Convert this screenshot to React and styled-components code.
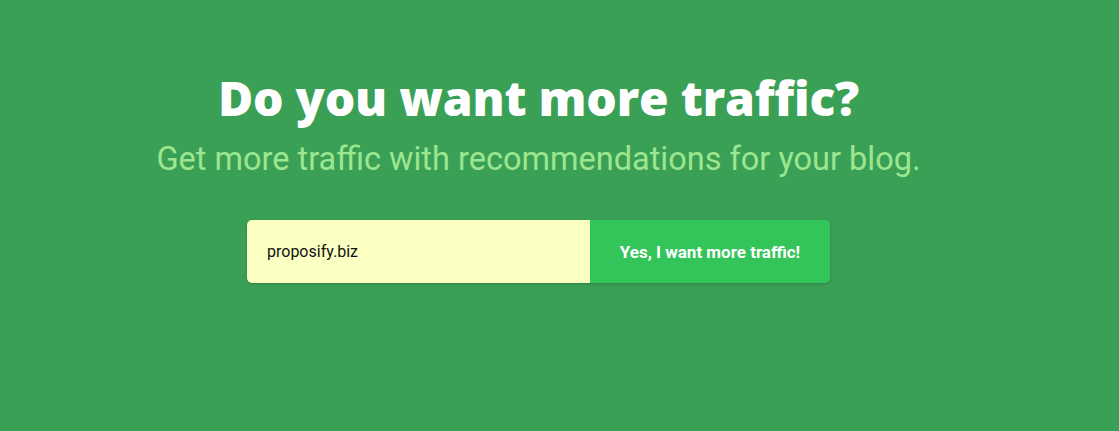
import React from "react";
import styled, { createGlobalStyle } from "styled-components";

const GlobalStyle = createGlobalStyle`
  html, body {
    margin: 0;
    padding: 0;
    background: #3aa056;
  }
  body {
    font-family: Roboto, "Liberation Sans", sans-serif;
  }
`;

const Hero = styled.section`
  height: 431px;
  background: #3aa056;
  display: flex;
  flex-direction: column;
  align-items: center;
  padding: 70px 42px 0 0;
  box-sizing: border-box;
`;

const Title = styled.h1`
  margin: 0;
  color: #ffffff;
  font-family: "Open Sans", Roboto, sans-serif;
  font-size: 48px;
  font-weight: 800;
  letter-spacing: -0.2px;
  line-height: 56px;
`;

const Subtitle = styled.p`
  margin: 14px 0 0;
  color: #9ce68f;
  font-size: 32.5px;
  font-weight: 400;
  line-height: 38px;
`;

const Form = styled.form`
  margin-top: 42px;
  display: flex;
  width: 583px;
  height: 63px;
  border-radius: 5px;
  overflow: hidden;
  box-shadow: 0 1px 3px rgba(0, 0, 0, 0.2);
`;

const UrlInput = styled.input`
  flex: 1;
  border: 0;
  outline: none;
  background: #fbffc1;
  padding: 0 20px;
  font-family: inherit;
  font-size: 16px;
  color: #111;
`;

const SubmitButton = styled.button`
  width: 240px;
  border: 0;
  background: #33c45a;
  color: #ffffff;
  font-family: inherit;
  font-size: 17px;
  font-weight: 700;
  cursor: pointer;
`;

const App = () => {
  return (
    <>
      <GlobalStyle />
      <Hero>
        <Title>Do you want more traffic?</Title>
        <Subtitle>Get more traffic with recommendations for your blog.</Subtitle>
        <Form onSubmit={(e) => e.preventDefault()}>
          <UrlInput defaultValue="proposify.biz" />
          <SubmitButton type="submit">Yes, I want more traffic!</SubmitButton>
        </Form>
      </Hero>
    </>
  );
};

export default App;
